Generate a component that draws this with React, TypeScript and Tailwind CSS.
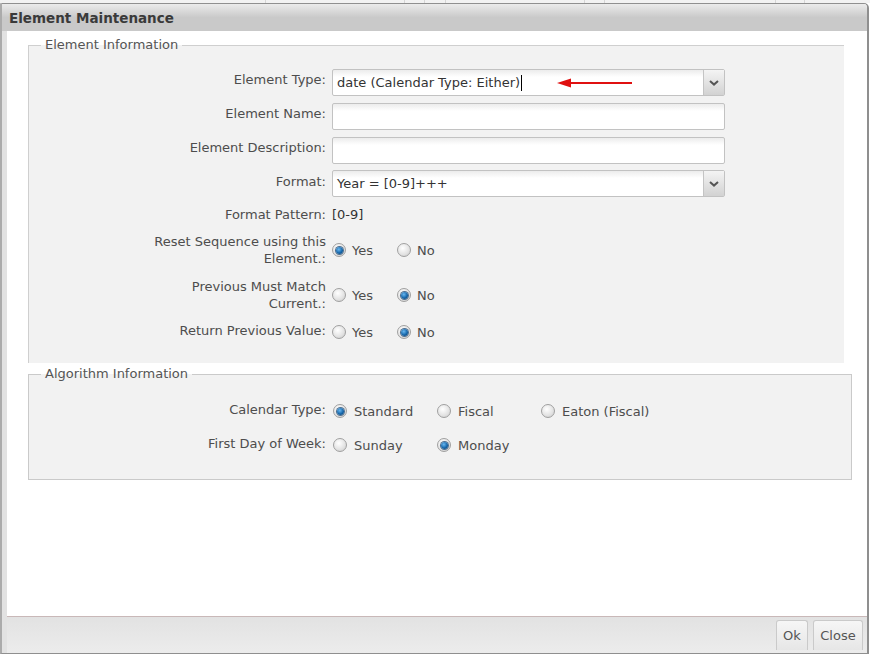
import React from "react";

function Radio({ checked }: { checked?: boolean }) {
  return (
    <span className="flex h-[14px] w-[14px] shrink-0 items-center justify-center rounded-full border border-[#a0a0a0] bg-[radial-gradient(circle_at_40%_35%,#ffffff,#e2e2e2_60%,#c6c6c6)]">
      {checked && (
        <span className="h-[7px] w-[7px] rounded-full bg-[radial-gradient(circle_at_40%_35%,#6ab8f0,#1667ab_55%,#0c3d6b)] shadow-[0_0_0_1px_#4f6f8f]" />
      )}
    </span>
  );
}

function Chevron() {
  return (
    <svg width="10" height="6" viewBox="0 0 10 6">
      <path d="M1 1 L5 4.6 L9 1" fill="none" stroke="#555" strokeWidth="2" />
    </svg>
  );
}

function TextBox() {
  return (
    <div className="h-[27px] w-[393px] rounded-[2px] border border-[#c2c2c2] bg-[linear-gradient(to_bottom,#ececec,#ffffff_7px)]" />
  );
}

function SelectBox({ value, children }: { value: string; children?: React.ReactNode }) {
  return (
    <div className="flex h-[27px] w-[393px] rounded-[2px] border border-[#c2c2c2] bg-[linear-gradient(to_bottom,#ececec,#ffffff_7px)]">
      <div className="relative flex flex-1 items-center pl-[4px] text-[#333]">
        <span>{value}</span>
        {children}
      </div>
      <div className="flex w-[21px] items-center justify-center border-l border-[#c4c4c4] bg-[linear-gradient(to_bottom,#f4f4f4,#d2d2d2)]">
        <Chevron />
      </div>
    </div>
  );
}

function Option({ label, checked, wide }: { label: string; checked?: boolean; wide?: boolean }) {
  return (
    <div className={wide ? "flex w-[104px] items-center gap-[7px] whitespace-nowrap pl-[1px]" : "flex w-[65px] items-center gap-[6px] whitespace-nowrap"}>
      <Radio checked={checked} />
      <span className="pt-[1px] text-[#4d4d4d]">{label}</span>
    </div>
  );
}

export default function App() {
  return (
    <div className="h-[654px] w-[870px] overflow-hidden bg-white font-['DejaVu_Sans',sans-serif] text-[13px] leading-[16px]">
      {/* page behind the dialog */}
      <div className="flex h-[3px] bg-[#f2f2f2]">
        <div className="ml-[265px] w-[140px] border-x border-[#d6d6d6]" />
        <div className="w-[20px] border-r border-[#d6d6d6]" />
        <div className="ml-[20px] w-[140px] border-x border-[#d6d6d6]" />
        <div className="w-[20px] border-r border-[#d6d6d6]" />
        <div className="ml-[170px] w-[30px] border-x border-[#d6d6d6]" />
      </div>

      <div className="flex h-[651px] w-[869px] flex-col overflow-hidden rounded-tr-[5px] border-y border-r-2 border-l-2 border-[#8f8f8f] border-l-[#ababab]">
        <div className="flex h-[27px] items-center bg-[linear-gradient(to_bottom,#ebebeb,#c9c9c9_50%,#c9c9c9)] pl-[7px] text-[13.5px] font-bold text-[#3a3a3a]">
          Element Maintenance
        </div>

        <div className="flex flex-1 flex-col border-l-[5px] border-[#e2e2e2]">
          <div className="flex-1 bg-white pl-[21px]">
            <fieldset className="mt-[6px] w-[816px] border-t border-l border-[#cfcfcf] bg-[#f2f2f2] pb-[21px]">
              <legend className="ml-[12px] px-[4px] leading-[16px] text-[#555]">Element Information</legend>

              <div className="flex flex-col pl-[121px]">
                <div className="mt-[16px] flex gap-[6px]">
                  <div className="w-[176px] pt-[3px] text-right text-[#4d4d4d]">Element Type:</div>
                  <SelectBox value="date (Calendar Type: Either)">
                    <span className="ml-[1px] h-[16px] w-[1px] bg-black" />
                    <svg className="absolute left-[224px] top-[8px]" width="76" height="10" viewBox="0 0 76 10">
                      <path d="M13 5 H75" stroke="#e01010" strokeWidth="2" />
                      <path d="M0 5 L14 0.5 L14 9.5 Z" fill="#e01010" />
                    </svg>
                  </SelectBox>
                </div>

                <div className="mt-[7px] flex gap-[6px]">
                  <div className="w-[176px] pt-[3px] text-right text-[#4d4d4d]">Element Name:</div>
                  <TextBox />
                </div>

                <div className="mt-[7px] flex gap-[6px]">
                  <div className="w-[176px] pt-[3px] text-right text-[#4d4d4d]">Element Description:</div>
                  <TextBox />
                </div>

                <div className="mt-[6px] flex gap-[6px]">
                  <div className="w-[176px] pt-[4px] text-right text-[#4d4d4d]">Format:</div>
                  <SelectBox value="Year = [0-9]+++" />
                </div>

                <div className="mt-[9px] flex h-[18px] items-center gap-[6px]">
                  <div className="w-[176px] text-right text-[#4d4d4d]">Format Pattern:</div>
                  <div className="text-[#333]">[0-9]</div>
                </div>

                <div className="mt-[9px] flex h-[34px] items-center gap-[6px]">
                  <div className="w-[176px] text-right leading-[17px] text-[#4d4d4d]">Reset Sequence using this Element.:</div>
                  <div className="flex">
                    <Option label="Yes" checked />
                    <Option label="No" />
                  </div>
                </div>

                <div className="mt-[11px] flex h-[34px] items-center gap-[6px]">
                  <div className="w-[176px] text-right leading-[17px] text-[#4d4d4d]">Previous Must Match Current.:</div>
                  <div className="flex">
                    <Option label="Yes" />
                    <Option label="No" checked />
                  </div>
                </div>

                <div className="mt-[10px] flex h-[20px] items-center gap-[6px]">
                  <div className="w-[176px] pb-[2px] text-right text-[#4d4d4d]">Return Previous Value:</div>
                  <div className="flex">
                    <Option label="Yes" />
                    <Option label="No" checked />
                  </div>
                </div>
              </div>
            </fieldset>

            <fieldset className="mt-[3px] w-[824px] border border-[#cacaca] bg-[#f2f2f2] pb-[24px]">
              <legend className="ml-[12px] px-[4px] leading-[16px] text-[#555]">Algorithm Information</legend>

              <div className="flex flex-col pl-[121px]">
                <div className="mt-[19px] flex h-[20px] items-center gap-[6px]">
                  <div className="w-[176px] pb-[2px] text-right text-[#4d4d4d]">Calendar Type:</div>
                  <div className="flex">
                    <Option label="Standard" checked wide />
                    <Option label="Fiscal" wide />
                    <Option label="Eaton (Fiscal)" wide />
                  </div>
                </div>

                <div className="mt-[14px] flex h-[20px] items-center gap-[6px]">
                  <div className="w-[176px] pb-[2px] text-right text-[#4d4d4d]">First Day of Week:</div>
                  <div className="flex">
                    <Option label="Sunday" wide />
                    <Option label="Monday" checked wide />
                  </div>
                </div>
              </div>
            </fieldset>
          </div>

          <div className="flex h-[37px] justify-end gap-[5px] border-t border-[#c9b8b8] bg-[linear-gradient(to_bottom,#e2e2e2,#ececec)] pr-[4px] pt-[3px]">
            <button className="h-[30px] w-[32px] rounded-t-[3px] border border-b-0 border-[#cacaca] bg-[linear-gradient(to_bottom,#f6f6f6,#e6e6e6)] text-[#555]">
              Ok
            </button>
            <button className="h-[30px] w-[50px] rounded-t-[3px] border border-b-0 border-[#cacaca] bg-[linear-gradient(to_bottom,#f6f6f6,#e6e6e6)] text-[#555]">
              Close
            </button>
          </div>
        </div>
      </div>
    </div>
  );
}
